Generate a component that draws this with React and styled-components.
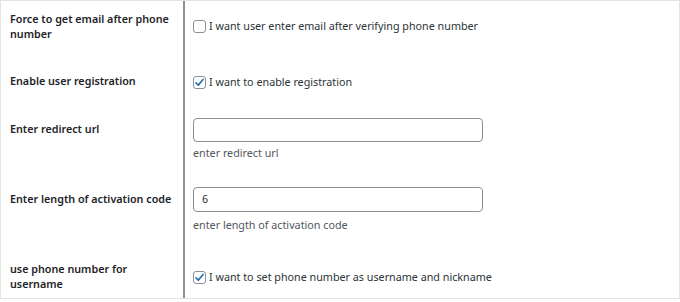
import React from "react";
import styled, { createGlobalStyle } from "styled-components";

const Global = createGlobalStyle`
  html, body { margin: 0; padding: 0; background: #ffffff; }
  body { font-family: "Noto Sans", "Open Sans", sans-serif; font-size: 10.75px; color: #1d2327; }
  * { box-sizing: border-box; }
`;

const Frame = styled.div`
  width: 680px;
  height: 299px;
  border: 1px solid #e3e4e6;
  background: #fff;
  display: flex;
  flex-direction: column;
  overflow: hidden;
`;

const Row = styled.div`
  display: grid;
  grid-template-columns: 182px 1fr;
  height: ${(p) => p.$h}px;
`;

const Label = styled.div`
  font-weight: 600;
  font-size: 10.75px;
  line-height: 15px;
  padding: ${(p) => p.$pt}px 10px 0 9px;
  color: #1d2327;
`;

const Field = styled.div`
  border-left: 2px solid #8f9296;
  padding: ${(p) => p.$pt}px 10px 0 8px;
  display: flex;
  flex-direction: column;
  align-items: flex-start;
`;

const CheckLine = styled.label`
  display: flex;
  align-items: center;
  gap: 3px;
  font-size: 10.75px;
  line-height: 13px;
  color: #2c3338;
`;

const Box = styled.span`
  width: 13px;
  height: 13px;
  border: 1px solid #8c8f94;
  border-radius: 3px;
  background: #fff;
  display: inline-flex;
  align-items: center;
  justify-content: center;
  flex: none;
`;

const Input = styled.div`
  width: 290px;
  height: ${(p) => p.$h || 24}px;
  border: 1px solid #8c8f94;
  border-radius: 4px;
  background: #fff;
  padding: 0 8px;
  font-size: 10.75px;
  line-height: ${(p) => (p.$h || 24) - 2}px;
  color: #2c3338;
`;

const Desc = styled.div`
  margin-top: ${(p) => p.$mt}px;
  font-size: 10.75px;
  line-height: 15px;
  color: #50575e;
`;

const Check = ({ checked, children }) => (
  <CheckLine>
    <Box>
      {checked && (
        <svg width="11" height="11" viewBox="0 0 20 20">
          <path
            d="M3.5 10.5 L7.8 14.8 L16.5 4.5"
            fill="none"
            stroke="#2271b1"
            strokeWidth="3"
            strokeLinecap="round"
            strokeLinejoin="round"
          />
        </svg>
      )}
    </Box>
    {children}
  </CheckLine>
);

export default function App() {
  return (
    <>
      <Global />
      <Frame>
        <Row $h={55}>
          <Label $pt={11}>Force to get email after phone number</Label>
          <Field $pt={19}>
            <Check>I want user enter email after verifying phone number</Check>
          </Field>
        </Row>
        <Row $h={49}>
          <Label $pt={18}>Enable user registration</Label>
          <Field $pt={20}>
            <Check checked>I want to enable registration</Check>
          </Field>
        </Row>
        <Row $h={69}>
          <Label $pt={17}>Enter redirect url</Label>
          <Field $pt={13}>
            <Input />
            <Desc $mt={4}>enter redirect url</Desc>
          </Field>
        </Row>
        <Row $h={70}>
          <Label $pt={18}>Enter length of activation code</Label>
          <Field $pt={13}>
            <Input $h={25}>6</Input>
            <Desc $mt={6}>enter length of activation code</Desc>
          </Field>
        </Row>
        <Row $h={54}>
          <Label $pt={18}>use phone number for username</Label>
          <Field $pt={27}>
            <Check checked>I want to set phone number as username and nickname</Check>
          </Field>
        </Row>
      </Frame>
    </>
  );
}
